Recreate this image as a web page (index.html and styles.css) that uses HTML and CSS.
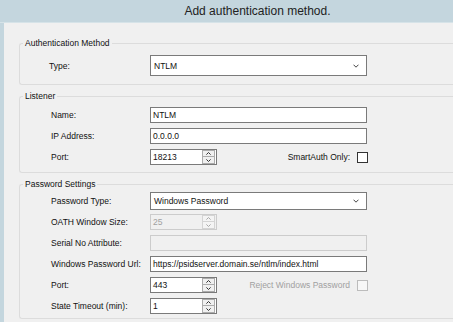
FILE: index.html
```html
<!DOCTYPE html>
<html lang="en">
<head>
  <meta charset="UTF-8">
  <meta name="viewport" content="width=device-width, initial-scale=1.0">
  <title>Add authentication method</title>
  <link rel="stylesheet" href="styles.css">
</head>
<body>
  <div class="dialog">
    <div class="title">Add authentication method.</div>
    <div class="panel">

      <fieldset class="group">
        <legend>Authentication Method</legend>
        <div class="rows rows-auth">
          <div class="row row-tall">
            <span class="label label-type">Type:</span>
            <div class="select select-tall">
              <span>NTLM</span>
              <svg class="caret" width="6" height="4" viewBox="0 0 6 4"><polyline points="0.5,0.7 3,3.2 5.5,0.7" fill="none" stroke="#444" stroke-width="1"/></svg>
            </div>
          </div>
        </div>
      </fieldset>

      <fieldset class="group">
        <legend>Listener</legend>
        <div class="rows rows-listener">
          <div class="row">
            <span class="label">Name:</span>
            <div class="input">NTLM</div>
          </div>
          <div class="row">
            <span class="label">IP Address:</span>
            <div class="input">0.0.0.0</div>
          </div>
          <div class="row">
            <span class="label">Port:</span>
            <div class="spin">
              <span class="spin-value">18213</span>
              <div class="spin-buttons">
                <span class="spin-btn"><svg width="5" height="3" viewBox="0 0 5 3"><polyline points="0.4,2.6 2.5,0.5 4.6,2.6" fill="none" stroke="#333" stroke-width="1"/></svg></span>
                <span class="spin-btn"><svg width="5" height="3" viewBox="0 0 5 3"><polyline points="0.4,0.4 2.5,2.5 4.6,0.4" fill="none" stroke="#333" stroke-width="1"/></svg></span>
              </div>
            </div>
            <div class="check-field">
              <span>SmartAuth Only:</span>
              <span class="checkbox"></span>
            </div>
          </div>
        </div>
      </fieldset>

      <fieldset class="group">
        <legend>Password Settings</legend>
        <div class="rows rows-password">
          <div class="row">
            <span class="label">Password Type:</span>
            <div class="select">
              <span>Windows Password</span>
              <svg class="caret" width="6" height="4" viewBox="0 0 6 4"><polyline points="0.5,0.7 3,3.2 5.5,0.7" fill="none" stroke="#444" stroke-width="1"/></svg>
            </div>
          </div>
          <div class="row">
            <span class="label">OATH Window Size:</span>
            <div class="spin disabled">
              <span class="spin-value">25</span>
              <div class="spin-buttons">
                <span class="spin-btn"><svg width="5" height="3" viewBox="0 0 5 3"><polyline points="0.4,2.6 2.5,0.5 4.6,2.6" fill="none" stroke="#a8a8a8" stroke-width="1"/></svg></span>
                <span class="spin-btn"><svg width="5" height="3" viewBox="0 0 5 3"><polyline points="0.4,0.4 2.5,2.5 4.6,0.4" fill="none" stroke="#a8a8a8" stroke-width="1"/></svg></span>
              </div>
            </div>
          </div>
          <div class="row">
            <span class="label">Serial No Attribute:</span>
            <div class="input disabled"></div>
          </div>
          <div class="row">
            <span class="label">Windows Password Url:</span>
            <div class="input">https://psidserver.domain.se/ntlm/index.html</div>
          </div>
          <div class="row">
            <span class="label">Port:</span>
            <div class="spin">
              <span class="spin-value">443</span>
              <div class="spin-buttons">
                <span class="spin-btn"><svg width="5" height="3" viewBox="0 0 5 3"><polyline points="0.4,2.6 2.5,0.5 4.6,2.6" fill="none" stroke="#333" stroke-width="1"/></svg></span>
                <span class="spin-btn"><svg width="5" height="3" viewBox="0 0 5 3"><polyline points="0.4,0.4 2.5,2.5 4.6,0.4" fill="none" stroke="#333" stroke-width="1"/></svg></span>
              </div>
            </div>
            <div class="check-field disabled">
              <span>Reject Windows Password</span>
              <span class="checkbox"></span>
            </div>
          </div>
          <div class="row">
            <span class="label">State Timeout (min):</span>
            <div class="spin">
              <span class="spin-value">1</span>
              <div class="spin-buttons">
                <span class="spin-btn"><svg width="5" height="3" viewBox="0 0 5 3"><polyline points="0.4,2.6 2.5,0.5 4.6,2.6" fill="none" stroke="#333" stroke-width="1"/></svg></span>
                <span class="spin-btn"><svg width="5" height="3" viewBox="0 0 5 3"><polyline points="0.4,0.4 2.5,2.5 4.6,0.4" fill="none" stroke="#333" stroke-width="1"/></svg></span>
              </div>
            </div>
          </div>
        </div>
      </fieldset>

    </div>
  </div>
</body>
</html>
```

FILE: styles.css
```css
html, body {
  height: 100%;
}
body {
  margin: 0;
  background: #c4d6de;
  font-family: 'Liberation Sans', Arial, sans-serif;
  font-size: 8.5px;
  color: #111;
  overflow: hidden;
}
.dialog {
  height: 100%;
  display: flex;
  flex-direction: column;
}
.title {
  height: 21px;
  padding: 1px 0 0 62px;
  line-height: 21px;
  text-align: center;
  font-size: 12px;
  color: #222;
  border-bottom: 1px solid #d6e3e8;
}
.panel {
  flex: 1;
  margin-left: 4px;
  background: #f0f0f0;
  padding: 15px 0 0 15px;
}
.group {
  margin: 6px 0 0;
  padding: 0;
  border: 1px solid #dcdcdc;
  border-right: none;
  border-radius: 3px 0 0 3px;
  min-width: 0;
}
.group:first-child {
  margin-top: 0;
}
legend {
  margin-left: 3px;
  padding: 0 2px;
  line-height: 10px;
  font-size: 8.5px;
  color: #111;
}
.rows {
  display: flex;
  flex-direction: column;
  gap: 1px;
  padding-left: 31px;
}
.rows-auth {
  padding-top: 7px;
  padding-bottom: 8px;
}
.rows-listener {
  padding-top: 4px;
  padding-bottom: 5px;
}
.rows-password {
  padding-top: 2px;
  padding-bottom: 2px;
}
.row {
  display: flex;
  align-items: center;
  height: 20px;
  width: 317px;
}
.row-tall {
  height: 21px;
}
.label {
  width: 99px;
  flex-shrink: 0;
}
.label-type {
  margin-left: -2px;
  width: 101px;
}
.select,
.input,
.spin {
  box-sizing: border-box;
  background: #fff;
  border: 1px solid #7a7a7a;
  display: flex;
  align-items: center;
}
.select {
  width: 217px;
  height: 18px;
  padding: 0 7px 0 3px;
  justify-content: space-between;
}
.select-tall {
  height: 21px;
}
.input {
  width: 217px;
  height: 16px;
  padding-left: 2px;
}
.input.disabled {
  background: #f0f0f0;
  border-color: #cccccc;
}
.spin {
  width: 67px;
  height: 16px;
  padding-left: 2px;
  justify-content: space-between;
}
.spin.disabled {
  background: #f0f0f0;
  border-color: #cccccc;
  color: #a0a0a0;
}
.spin-buttons {
  display: flex;
  flex-direction: column;
  margin-right: 1px;
}
.spin-btn {
  box-sizing: border-box;
  width: 13px;
  height: 7px;
  display: flex;
  align-items: center;
  justify-content: center;
  background: #f0f0f0;
  border: 1px solid #acacac;
}
.spin-btn + .spin-btn {
  border-top: none;
}
.spin.disabled .spin-btn {
  background: #f4f4f4;
  border-color: #d4d4d4;
}
.check-field {
  margin-left: auto;
  display: flex;
  align-items: center;
  gap: 7px;
}
.checkbox {
  box-sizing: border-box;
  width: 11px;
  height: 11px;
  background: #fff;
  border: 1px solid #333;
}
.check-field.disabled {
  color: #a0a0a0;
}
.check-field.disabled .checkbox {
  background: #f7f7f7;
  border-color: #bcbcbc;
}
```
